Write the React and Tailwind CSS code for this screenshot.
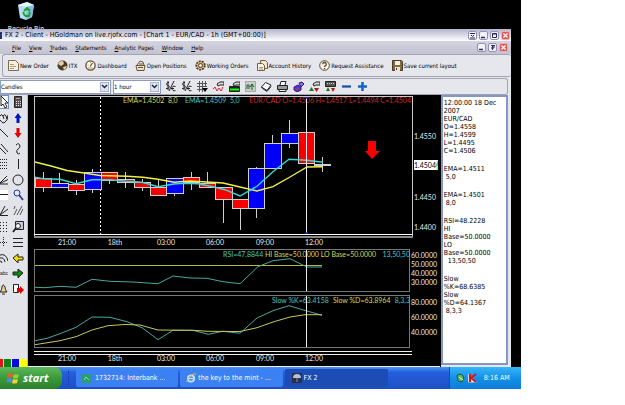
import { useState } from "react";

const menus = ["File", "View", "Trades", "Statements", "Analytic Pages", "Window", "Help"];

const axis = [[67, "21:00"], [115, "18th"], [166, "03:00"], [215, "06:00"], [265, "09:00"], [314, "12:00"]];

// x, width, top, bottom, high, low, colour
const candles = [
  [35, 16, 178, 187, 172, 191, "red"],
  [51, 17, 183, 187, 173, 187, "blue"],
  [68, 16, 184, 190, 180, 194, "red"],
  [84, 17, 172, 189, 169, 192, "blue"],
  [101, 16, 172, 180, 172, 183, "red"],
  [117, 17, 179, 182, 172, 187, "red"],
  [134, 16, 182, 187, 179, 190, "red"],
  [150, 16, 187, 195, 179, 195, "red"],
  [166, 17, 178, 193, 178, 195, "blue"],
  [183, 16, 177, 182, 172, 189, "red"],
  [199, 16, 183, 187, 172, 187, "red"],
  [215, 17, 187, 199, 187, 222, "red"],
  [232, 16, 199, 208, 199, 229, "red"],
  [248, 16, 168, 208, 167, 217, "blue"],
  [264, 17, 143, 168, 135, 168, "blue"],
  [281, 17, 133, 143, 120, 147, "blue"],
  [298, 16, 132, 163, 132, 163, "red"],
  [314, 16, 164, 165, 157, 171, "red"],
];

const ema8 = "35,162 51,166 67,170.5 84,173 100,175.5 127,176.3 143,177.3 158,179.3 174,182.3 190,181 207,182 223,183 240,187 257,191 273,186.7 290,177 307,167 323,166.7";
const ema5 = "35,177.3 43,178.7 60,179.3 76,183.7 92,179.7 110,179.7 126,181.3 142,182.3 158,186.7 174,184 183,183.3 198,183.7 213,186.7 225,189.7 240,196 257,186.3 273,171.7 289,159.3 307,160.3 323,162.3";
const rsi = "35,287.3 45,287.7 60,286.3 76,287.3 92,279.3 110,281.3 133,282 158,283.7 173,276 190,278 207,278.3 223,281.7 240,283.7 258,266.7 273,260.7 290,258.7 307,267 322,267";
const slowK = "35,340.7 47,338.3 60,333.7 76,327.3 92,317 110,317.3 127,321.7 142,327.7 158,339.7 173,330.3 193,330.3 208,334.3 223,331.3 240,333.3 257,318 273,310.7 289,305.7 307,311 322,315.3";
const slowD = "35,344.7 60,340.7 76,336.7 92,330 108,325.7 125,324.5 140,325 158,330 193,330.3 208,331.3 240,331.5 257,327.7 273,322 290,317 305,314.7 322,314.7";

const readout = [
  ["12:00:00 18 Dec", "2007", "EUR/CAD", "O=1.4558", "H=1.4599", "L=1.4495", "C=1.4506"],
  ["EMA=1.4511", " 5,0"],
  ["EMA=1.4501", " 8,0"],
  ["RSI=48.2228", "HI", "Base=50.0000", "LO", "Base=50.0000", "  13,50,50"],
  ["Slow", "%K=68.6385", "Slow", "%D=64.1367", " 8,3,3"],
];

function Svg({ w = 11, h = 11, children }) {
  return (
    <svg width={w} height={h} viewBox={`0 0 ${w} ${h}`} fill="none" stroke="#222" className="shrink-0" aria-hidden="true">
      {children}
    </svg>
  );
}

const actions = [
  ["New Order", <><path d="M.5 .5h7l3 3v7h-10z" fill="#f7efdf" stroke="#7a6a50" /><path d="M2 4.500h4M2 6.500h6M2 8.500h4" stroke="#b09a78" /></>],
  ["ITX", <><circle cx="5.500" cy="5.500" r="5" fill="#4a3a2a" stroke="none" /><path d="M1 4a5 5 0 0 1 5-3l1 3-3 2zM6 7l4-1a5 5 0 0 1-3 4z" fill="#e2cfae" stroke="none" /></>],
  ["Dashboard", <><circle cx="5.500" cy="5.500" r="4.600" fill="#fffdf5" stroke="#5f4a30" strokeWidth="1.300" /><path d="M5 6.500L7.500 3" stroke="#5f4a30" strokeWidth="1.200" /><path d="M2.500 5h1M5.500 2v1M3 8h5" stroke="#b89868" /></>],
  ["Open Positions", <><path d="M1 5.500h9l-1 5H2z" fill="#efe2cb" stroke="#6a553a" /><path d="M2 5l3-4 3 1 1 3M4 4h4M3 7.500h5" stroke="#6a553a" /></>],
  ["Working Orders", <><circle cx="5.500" cy="5.500" r="4.300" fill="#d6b98c" stroke="#4a3620" strokeWidth="1.600" strokeDasharray="2 1" /><circle cx="5.500" cy="5.500" r="2" fill="#f5ead6" stroke="#4a3620" /></>],
  ["Account History", <><path d="M3.500 .5h5l2 2v6h-7z" fill="#f2e7d2" stroke="#75624a" /><path d="M.5 3.500h5l2 2v5h-7z" fill="#fbf4e6" stroke="#75624a" /><path d="M2 7.500h4M2 9h4" stroke="#b09a78" /></>],
  ["Request Assistance", <><circle cx="5.500" cy="5.500" r="4.800" fill="#fffaf0" stroke="#5a4528" /><path d="M3.700 4.300a1.800 1.800 0 1 1 2.600 1.600q-.8.400-.8 1.200M5.500 8v1.200" stroke="#5a4528" strokeWidth="1.300" /></>],
  ["Save current layout", <><path d="M.5 .5h9l1 1v9h-10z" fill="#7d6a4a" stroke="#4a3b22" /><path d="M3 1h5v4H3z" fill="#f7f0e0" stroke="none" /><path d="M3 7h5v4H3z" fill="#efe5cd" stroke="none" /><path d="M4.500 8v2" stroke="#4a3b22" /></>],
];

const dollar = <path d="M4 1.500C1 1 1 4.500 3 4.500S5 8 1 7.500M3 0v9M9 0L4 10M10.500 5.500C8 4.500 7 6 7 7.500s1.500 3 3.500 2M6 7.500h3" />;
const hand = <path d="M4 3l3-2h4v3H7L5 5z" fill="#ddd" />;

const chartTools = [
  ["Buy currency", dollar],
  ["Sell currency", dollar],
  ["Grid", <><path d="M0 2.500h10M0 5.500h10M0 8.500h6M2.500 0v11M5.500 0v11M8.500 0v5" stroke="#555" /><path d="M5 7h6l-3 4z" fill="#000" stroke="none" /></>],
  ["Edit indicator", <>{hand}<path d="M0 8l2-2 2 4 2-3 2 3 2-4" stroke="#d22" /></>],
  ["Edit chart", <>{hand}<path d="M.5 5.500h10v5H.5z" fill="#222" /><path d="M1 8.500h9" stroke="#1f1" strokeWidth="2" /></>],
  ["Snapshot", <><path d="M.5 .5h10v10H.5z" fill="#c8cfc8" stroke="#777" strokeDasharray="1 1" /><path d="M2 8V4h2v4M5 6l2-3 2 3M7 4v5" stroke="#195c2a" /></>],
  ["Erase", <><path d="M.5 6l4-4.500L10 4 6 9.500z" fill="#fff" /><path d="M.5 6l1 1.500 4.500 3L10 5.500" stroke="#224" /></>],
  ["Print", <><path d="M3 4l1-3.500h5L8 4" fill="#fff" /><path d="M.5 4.500h10v4h-10z" fill="#999" /><path d="M2 8.500h7v2H2z" fill="#eee" /></>],
  ["Shapes", <><path d="M1 6l4-2 3 2v3l-4 2-3-2z" fill="#5538c8" stroke="#2a1c80" /><path d="M6 2l3-1 2 2-3 3z" fill="#8a6ff0" stroke="#2a1c80" /><path d="M2 8h4" stroke="#e33" /></>],
  ["Trade on chart", <>{hand}<path d="M0 10l2.500-4L5 10z" fill="#1a7a1a" stroke="none" /><path d="M5 7h5l-2.500 4z" fill="#b11" stroke="none" /></>],
  ["Order marks", <><path d="M.5 .5h10v5H.5z" fill="#555" /><path d="M2 2.500h7" stroke="#ddd" strokeDasharray="1 1" /><path d="M1 10l2-4 2 4z" fill="#1a7a1a" stroke="none" /><path d="M6 7h4l-2 4z" fill="#b11" stroke="none" /></>],
  ["Zoom out", <path d="M1 5.500h9" stroke="#124f9c" strokeWidth="2.200" />],
  ["Zoom in", <path d="M1 5.500h9M5.500 1v9" stroke="#1565c8" strokeWidth="2.600" />],
];

const palette = [
  ["Select", <path d="M1 0v10l2-2 2 4 2-1-2-4h3z" fill="#fff" />, "Calculator", <><path d="M2.500 .5h7v11h-7z" fill="#555" /><path d="M4 2.500h4" stroke="#d88" /><path d="M4 5.500h5M4 7.500h5M4 9.500h5" stroke="#ddd" strokeDasharray="1 1" /></>],
  ["Pan", <path d="M0 4q2-3 3 0l1 3M3 4q2-3 3 0l1 3M0 8q2 3 4 3 4-2 4-8" />, "Up mark", <path d="M6 1l3.500 5H7.500v5h-3V6H2.500z" fill="#0018c0" stroke="none" />],
  ["Trend line", <path d="M0 2l8 8" />, "Down mark", <path d="M6 11L2.500 6h2V1h3v5h2z" fill="#e00000" stroke="none" />],
  ["Channel", <path d="M0 5l6 6M1 1l7 8" />, "Curve", <path d="M4 2q3-3 4 1 0 2-2 3t-1 4q2 2 3 0" />],
  ["Retracement", <path d="M0 1.500h7M0 4.500h7M0 7.500h7M0 10.500h7" strokeDasharray="1 1" />, "Vertical line", <path d="M6.500 1v10" />],
  ["Fan", <path d="M0 9l7-7M0 9.500l8-4M0 10h8" />, "Ellipse", <circle cx="6" cy="6" r="5" />],
  ["Horizontal line", <><path d="M0 1h8v10H0z" fill="#fff" stroke="none" /><path d="M0 5.500h8" /></>, "Magnifier", <><circle cx="5" cy="4" r="3" fill="#dfe8ff" stroke="#223a80" /><path d="M7 6l4 5" stroke="#223a80" strokeWidth="1.800" /></>],
  ["Gann fan", <path d="M0 10l5-9M0 10l8-6M0 10.500h8" />, "Speed lines", <path d="M2 10l3-6M5 10l5-9M8 10l3-6M2 4l1-3" stroke="#555" />],
  ["Dot grid", <path d="M0 1.500h7M0 4.500h7M0 7.500h7M0 10.500h7" strokeDasharray="1 2" />, "Zoom area", <><path d="M3.500 .5h8v8h-8z" fill="#ccd" /><circle cx="6" cy="5" r="2.500" fill="#fff" /><path d="M4 7l-3 4" strokeWidth="1.800" /></>],
  ["Crosshair", <path d="M0 6.500h8M3.500 1v10" strokeDasharray="1 1" />, "Levels", <path d="M1 2.500h10M1 6.500h10M1 10.500h10" />],
  ["Arcs", <path d="M0 3q6-2 8 6M0 6q4-1 5 4M0 9q2 0 2 2" />, "Previous", <path d="M1 6l5-4v3h5v3H6v3z" fill="#f0e000" />],
  ["Text", <text x="0" y="8" fontSize="5" fill="#111" stroke="none" fontFamily="Liberation Sans, sans-serif">abc</text>, "Next", <path d="M11 6L6 2v3H1v3h5v3z" fill="#0a8a0a" />],
  ["Alert", <path d="M0 9q2-2 2-5 1-4 3 0 0 3 2 5zM2 11h3" fill="#f0d890" />, "Exit", <><path d="M1.500 1.500h5v8h-5z" fill="#fff" /><path d="M5 5h3V3l4 4-4 4V9H5z" fill="#e00000" stroke="none" /></>],
];

function WindowButtons({ kinds }) {
  return (
    <div className="flex gap-[2px]">
      {kinds.map((kind) => (
        <button
          key={kind}
          aria-label={kind}
          className={`flex size-[9px] items-center justify-center rounded-[2px] border ${kind === "Close" ? "border-[#f0b0b0] bg-[#e05858]" : "border-[#9090b8] bg-[#f2f2fa]"}`}
        >
          <svg width="7" height="7" viewBox="0 0 7 7" fill="none" stroke={kind === "Close" ? "#fff" : "#2a2a58"}>
            {kind === "Close" && <path d="M1.500 1.500l4 4M5.500 1.500l-4 4" strokeWidth="1.200" />}
            {kind === "Minimize" && <path d="M1 5.500h4" strokeWidth="1.500" />}
            {kind === "Maximize" && <path d="M1.500 1.500h4v4h-4zM1 2h5" />}
            {kind === "Restore" && <path d="M2 1.500h4M2 4h3v-2.500M3.500 2v4" />}
            {kind === "Roll up" && <path d="M1 1.500h5M2 3l1.500 1.500L5 3M1 6h5" />}
          </svg>
        </button>
      ))}
    </div>
  );
}

function Combo({ label, value, options, onChange, className }) {
  return (
    <div className={`relative h-[14px] border border-[#8c9cc0] bg-white ${className}`}>
      <select aria-label={label} value={value} onChange={(e) => onChange(e.target.value)} className="block h-full w-full appearance-none bg-transparent text-[6px] leading-[12px]">
        {options.map((option) => <option key={option}>{option}</option>)}
      </select>
      <span className="pointer-events-none absolute inset-y-px right-px flex w-[9px] items-center justify-center border border-[#a8b4d0] bg-[#dfe3f2]">
        <svg width="7" height="5" viewBox="0 0 7 5" fill="none" stroke="#223"><path d="M1 1l2.500 2.500L6 1" strokeWidth="1.400" /></svg>
      </span>
    </div>
  );
}

function Chart() {
  return (
    <svg viewBox="28 95 412 272" preserveAspectRatio="xMinYMin meet" className="block h-[272px] min-w-0 flex-1 bg-black font-['Lato',sans-serif] text-[7px]" fill="none" role="img" aria-label="EUR/CAD hourly chart">
      <g shapeRendering="crispEdges">
        <path d="M34.500 236V96.500H412.500V236" stroke="#c8c8c8" />
        <path d="M34 234.500H412" stroke="#fff" />
        <path d="M34 237H413" stroke="#8a8a8a" strokeWidth="2" />
        <path d="M34.500 249.500H409.500V291.500H34.500zM34.500 295.500H409.500V347.500H34.500z" stroke="#777" />
        <path d="M34 351.500H412M34 354.500H412M28 366.500H440" stroke="#eee" />
        <path d="M100.500 97V234" stroke="#fff" strokeDasharray="2 2" />
        {candles.map(([x, w, top, bottom, high, low, color]) => (
          <g key={x} stroke="#cfcfcf">
            <path d={`M${x + 8.5} ${high}V${low + 1}`} />
            <rect x={x + 0.5} y={top + 0.5} width={w} height={bottom - top} fill={color === "red" ? "#f80000" : "#0000f8"} />
          </g>
        ))}
        <path d="M35 265.500H322" stroke="#b8b840" />
      </g>
      <polyline points={ema8} stroke="#f0f040" strokeWidth="1.400" />
      <polyline points={ema5} stroke="#38d8d8" strokeWidth="1.400" />
      <polyline points={rsi} stroke="#4aa8a0" />
      <polyline points={slowK} stroke="#4aa8a0" />
      <polyline points={slowD} stroke="#c8c860" />
      <path d="M368 141h8v10h4l-8 8-7-8h3z" fill="#f80000" />

      <g fill="#d8d850">
        <text x="123" y="103">EMA=1.4502&nbsp; 8,0</text>
        <text x="265" y="257">HI Base=50.0000 LO Base=50.0000</text>
        <text x="333" y="303">Slow %D=63.8964</text>
      </g>
      <g fill="#48c8c0">
        <text x="185" y="103">EMA=1.4509&nbsp; 5,0</text>
        <text x="223" y="257">RSI=47.8844</text>
        <text x="410" y="257" textAnchor="end">13,50,50</text>
        <text x="272" y="303">Slow %K=63.4158</text>
        <text x="410" y="303" textAnchor="end">8,3,3</text>
      </g>
      <text x="411" y="103" textAnchor="end" fill="#d02828">EUR/CAD O=1.4506 H=1.4517 L=1.4494 C=1.4504</text>
      <path d="M306.500 97V234M306.500 250V291M306.500 296V347" stroke="#e8e8e8" shapeRendering="crispEdges" />
      <path d="M304 97h5l-2 2zM304 234h5l-2-2z" fill="#2020d0" />

      <g fill="#e8e8e8">
        <text x="414" y="139">1.4550</text>
        <rect x="414" y="160" width="24" height="10" fill="#fff" />
        <text x="414" y="168" fill="#000">1.4504</text>
        <path d="M438 160v10l-2-5z" fill="#30c0c0" />
        <path d="M438 165v5l-2-1z" fill="#e0e030" />
        <text x="414" y="200">1.4450</text>
        <text x="414" y="230">1.4400</text>
        <text x="411" y="258">60.0000</text>
        <text x="411" y="267">50.0000</text>
        <text x="411" y="276">40.0000</text>
        <text x="411" y="285">30.0000</text>
        <text x="411" y="305">80.0000</text>
        <text x="411" y="320">60.0000</text>
        <text x="411" y="335">40.0000</text>
        {axis.map(([x, label]) => (
          <g key={label} textAnchor="middle">
            <text x={x} y="245">{label}</text>
            <text x={x} y="361">{label}</text>
          </g>
        ))}
      </g>
    </svg>
  );
}

function Palette() {
  return (
    <div className="flex w-7 shrink-0 flex-col justify-between overflow-hidden border-r border-[#b8b8c8] bg-[#e3e3ea]">
      <div className="flex h-[200px] flex-col justify-between pt-px">
        {palette.map(([left, leftIcon, right, rightIcon], index) => (
          <div key={left} className="flex gap-1">
            <button aria-label={left} className={index === 0 ? "bg-white outline outline-[#6f8fc0]" : ""}><Svg w={8} h={12}>{leftIcon}</Svg></button>
            <button aria-label={right}><Svg w={12} h={12}>{rightIcon}</Svg></button>
          </div>
        ))}
      </div>
      <div className="flex h-2 gap-px">
        <button aria-label="Red" className="w-[3px] bg-[#e81010]" />
        <button aria-label="Green" className="w-[7px] bg-[#108010]" />
        <button aria-label="Blue" className="w-[7px] bg-[#0808e0]" />
        <button aria-label="Yellow" className="w-[7px] bg-[#ffff10]" />
      </div>
    </div>
  );
}

function Taskbar() {
  return (
    <footer className="flex h-[22px] items-stretch bg-linear-to-b from-[#4a94f4] via-[#245edc] via-25% to-[#1c4fc4] text-white">
      <button className="flex w-[62px] items-center gap-1 rounded-r-lg bg-linear-to-b from-[#5cb85c] via-[#3a9a3a] to-[#2c802c] pl-[7px] font-['Open_Sans',sans-serif] text-[11px] font-bold italic">
        <svg width="12" height="12" viewBox="0 0 12 12" aria-hidden="true">
          <path d="M1 2q2-2 5 0L5 6Q3 4 0 6z" fill="#f05a28" />
          <path d="M7 2q2 1 5 0l-1 4q-3 1-5 0z" fill="#8cd63c" />
          <path d="M0 7q3-2 5 0l-1 4q-2-2-4-1z" fill="#4a8cf8" />
          <path d="M6 7q2 1 5 0l-1 4q-3 1-5 0z" fill="#fcd030" />
        </svg>
        start
      </button>
      <span className="mx-[6px] my-1 w-[2px] border-l border-dotted border-[#123a98]" />
      <div className="flex min-w-0 flex-1 gap-[2px] py-[2px] pr-[61px]">
        <button className="flex min-w-0 flex-1 items-center gap-1 rounded-[2px] bg-[#3c81f3] pl-[6px]">
          <Svg w={9} h={9}><rect width="9" height="9" rx="1" fill="#2c9c74" stroke="none" /><path d="M2 6l2-3 3 3" stroke="#7fe0b0" /></Svg>
          <span className="truncate">1732714: Interbank ...</span>
        </button>
        <button className="flex min-w-0 flex-1 items-center gap-[2px] rounded-[2px] bg-[#3c81f3] pl-[6px]">
          <Svg w={10} h={10}><circle cx="5" cy="5.500" r="3.200" stroke="#bfe4ff" strokeWidth="1.800" /><path d="M2.500 5.500h5" stroke="#bfe4ff" strokeWidth="1.400" /><path d="M1 9Q0 6 5 2.500T9.500 2" stroke="#f0c030" /></Svg>
          <span className="truncate">the key to the mint - ...</span>
        </button>
        <button className="flex min-w-0 flex-1 items-center gap-[2px] rounded-[2px] bg-[#1c4db4] pl-[7px]">
          <Svg w={10} h={10}><rect width="10" height="10" fill="#28304c" stroke="none" /><path d="M1 5a4 4 0 0 1 8 0z" fill="#b8c0d8" stroke="none" /><path d="M5 5v4" stroke="#8890b0" /></Svg>
          <span className="truncate">FX 2</span>
        </button>
      </div>
      <div className="flex w-[72px] items-center gap-[3px] border-l border-[#0e4fa8] bg-linear-to-b from-[#38b4f8] via-[#1290e8] to-[#0e7cd8] pl-[6px]">
        <Svg w={9} h={10}><path d="M1 2l4-1 3 3-2 5-4-1z" fill="#57b857" stroke="#1b5c38" /><path d="M3 4l4 3" stroke="#dff" /></Svg>
        <Svg w={9} h={10}><path d="M.5 1v8h8" stroke="#ddd" fill="#fff" /><path d="M2 1v8M8 1L3 5l5 4" stroke="#d01818" strokeWidth="2" /></Svg>
        <time className="pl-1">8:16 AM</time>
      </div>
    </footer>
  );
}

export default function App() {
  const [style, setStyle] = useState("Candles");
  const [period, setPeriod] = useState("1 hour");

  return (
    <div className="min-h-screen bg-white font-['DejaVu_Sans_Condensed','DejaVu_Sans',sans-serif] text-[7px] leading-[10px] text-black">
      <div className="w-5/6 overflow-hidden bg-black">
        <div className="flex h-[29px] w-[52px] flex-col items-center overflow-hidden pt-[2px]">
          <svg width="18" height="19" viewBox="0 0 18 19" className="shrink-0" aria-hidden="true">
            <path d="M1 3l9-3 7 3-2 12-6 3-6-2z" fill="#b8dcf0" />
            <path d="M1 3l9-3 7 3-8 2z" fill="#e8f6fc" />
            <path d="M9 5l8-2-2 12-6 3z" fill="#86bcdc" />
            <path d="M7 9l3-3 3 3M13 10l-1 4H8M6 10l2 4" fill="none" stroke="#18a028" strokeWidth="1.800" />
          </svg>
          <span className="pt-[3px] whitespace-nowrap text-white">Recycle Bin</span>
        </div>

        <div className="mr-[10px] bg-[#e6e6ed]">
          <header className="flex h-[12px] items-center justify-between bg-linear-to-b from-[#b4b4cc] to-white pr-px">
            <h1 className="flex items-center gap-[3px] whitespace-nowrap"><span className="h-[7px] w-[2px] bg-[#20307a]" />FX 2 - Client - HGoldman on live.rjofx.com - [Chart 1 - EUR/CAD - 1h (GMT+00:00)]</h1>
            <WindowButtons kinds={["Roll up", "Minimize", "Maximize", "Close"]} />
          </header>
          <nav className="flex h-[13px] items-center justify-between bg-linear-to-b from-[#d4d4e0] to-[#c2c2d2] pr-[3px] pl-3">
            <div className="flex gap-2 text-[6px]">
              {menus.map((menu) => <button key={menu} className="whitespace-nowrap"><span className="underline">{menu[0]}</span>{menu.slice(1)}</button>)}
            </div>
            <WindowButtons kinds={["Minimize", "Restore", "Close"]} />
          </nav>
          <div className="ml-[2px] flex h-[23px] items-center gap-2 rounded-[3px] border border-r-0 border-[#a4a4b0] pl-[5px] text-[6px]">
            {actions.map(([label, icon]) => (
              <button key={label} className="flex items-center gap-px whitespace-nowrap"><Svg>{icon}</Svg>{label}</button>
            ))}
          </div>
          <div className="mt-px mr-[3px] flex h-[17px] items-center rounded-r-[3px] border border-l-0 border-[#a4a4b0]">
            <Combo label="Chart style" value={style} options={["Candles", "Bars", "Line"]} onChange={setStyle} className="w-[111px]" />
            <Combo label="Period" value={period} options={["1 hour", "4 hours", "1 day"]} onChange={setPeriod} className="ml-[2px] w-12" />
            <div className="flex gap-[5px] pl-1">
              {chartTools.map(([label, icon]) => <button key={label} aria-label={label}><Svg>{icon}</Svg></button>)}
            </div>
          </div>

          <main className="flex">
            <Palette />
            <Chart />
            <aside className="mr-[3px] mb-[2px] flex w-[67px] shrink-0 flex-col gap-[10px] border-2 border-[#8496c4] bg-white pt-[2px] pl-px leading-[8px] whitespace-pre">
              {readout.map((group, index) => (
                <div key={index}>{group.map((line, i) => <p key={i}>{line}</p>)}</div>
              ))}
            </aside>
          </main>
        </div>
        <Taskbar />
      </div>
    </div>
  );
}
